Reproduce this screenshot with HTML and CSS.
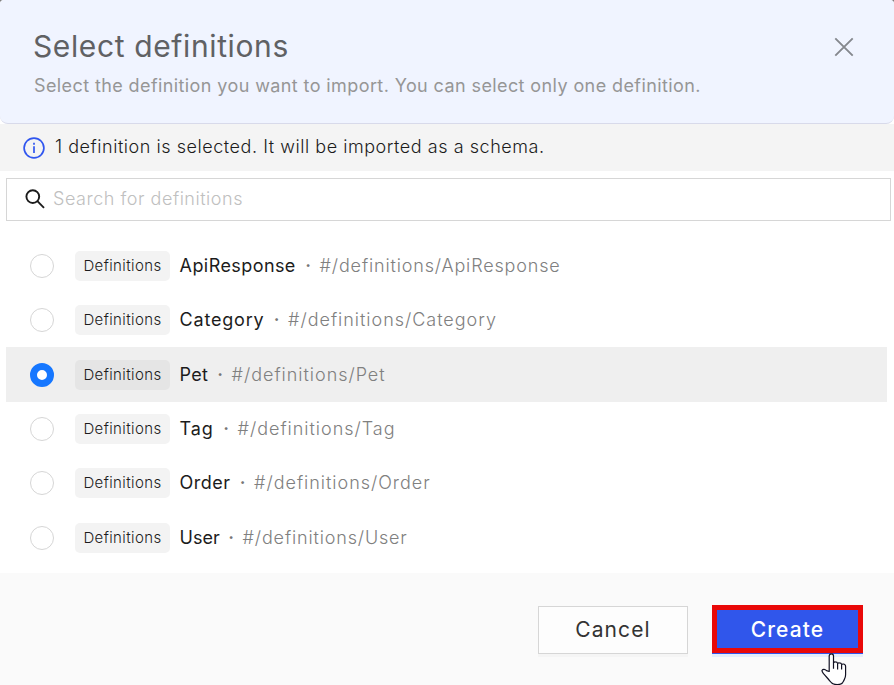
FILE: index.html
```
<!DOCTYPE html>
<html lang="en">
<head>
<meta charset="utf-8">
<title>Select definitions</title>
<link rel="stylesheet" href="styles.css">
</head>
<body>
<main class="dialog">
  <header class="header">
    <div>
      <h1 class="title">Select definitions</h1>
      <p class="subtitle">Select the definition you want to import. You can select only one definition.</p>
    </div>
    <svg class="close" viewBox="0 0 20 20"><path d="M1.3 1.3 18.7 18.7M18.7 1.3 1.3 18.7"/></svg>
  </header>
  <div class="notice">
    <svg class="info" viewBox="0 0 22 22"><circle cx="11" cy="11" r="9.9"/><path d="M11 9.3v6.7M11 5.8v2"/></svg>
    <span class="notice-text">1 definition is selected. It will be imported as a schema.</span>
  </div>
  <div class="search">
    <svg class="lens" viewBox="0 0 20 20"><circle cx="7.8" cy="7.6" r="6.4"/><path d="M12.4 12.2 19 18.8"/></svg>
    <span class="placeholder">Search for definitions</span>
  </div>
  <ul class="list">
    <li class="row"><i class="radio"></i><span class="tag">Definitions</span><span class="name api">ApiResponse</span><span class="dot">·</span><span class="path">#/definitions/ApiResponse</span></li>
    <li class="row"><i class="radio"></i><span class="tag">Definitions</span><span class="name category">Category</span><span class="dot">·</span><span class="path wide">#/definitions/Category</span></li>
    <li class="row selected"><i class="radio"></i><span class="tag">Definitions</span><span class="name pet">Pet</span><span class="dot">·</span><span class="path wide">#/definitions/Pet</span></li>
    <li class="row"><i class="radio"></i><span class="tag">Definitions</span><span class="name tagname">Tag</span><span class="dot">·</span><span class="path wide">#/definitions/Tag</span></li>
    <li class="row"><i class="radio"></i><span class="tag">Definitions</span><span class="name order">Order</span><span class="dot">·</span><span class="path wide">#/definitions/Order</span></li>
    <li class="row"><i class="radio"></i><span class="tag">Definitions</span><span class="name user">User</span><span class="dot">·</span><span class="path">#/definitions/User</span></li>
  </ul>
  <footer class="footer">
    <button class="btn cancel">Cancel</button>
    <button class="btn create">Create</button>
  </footer>
  <svg class="cursor" viewBox="0 0 26 33"><path d="M8.2 18.5V3a2.1 2.1 0 0 1 4.3 0v6.8q.3-1 1.8-.9 2 0 2.3 1.6.5-.7 1.8-.6 1.9.1 2.2 1.6.6-.6 1.7-.5 2.3.2 2.3 2.5v8.3c0 3.2-1.2 4.3-2 6.2-.9 2.5-2.9 3.7-6.4 3.7-3.8 0-5.7-1.4-7.7-4.1-1.8-2.5-3.6-4-5.5-6.4-1.2-1.6-2.5-2.7-1.9-3.9.8-1.4 2.9-1.1 4.4.3z"/><path d="M12.5 9.8v6M16.6 10.6v5.8M20.6 11.6v5"/></svg>
</main>
</body>
</html>
```

FILE: styles.css
```
* { box-sizing: border-box; }
body {
  margin: 0;
  background: #808080;
  font-family: Inter, "Open Sans", sans-serif;
  font-size: 18px;
  font-weight: 300;
  color: #1c1c1c;
}
.dialog {
  position: relative;
  display: flex;
  flex-direction: column;
  height: 685px;
  overflow: hidden;
  background: #fff;
  border-radius: 4px 4px 0 0;
}
.header {
  display: flex;
  justify-content: space-between;
  height: 124px;
  flex: none;
  padding: 26px 40px 0 33px;
  background: #f0f4ff;
  border-bottom: 1px solid #d8daea;
  border-radius: 0 0 8px 8px;
}
.title {
  margin: 0;
  font-size: 30px;
  font-weight: 400;
  line-height: 40px;
  letter-spacing: .62px;
  color: #606164;
}
.subtitle {
  margin: 7px 0 0;
  padding-left: 1px;
  font-weight: 400;
  line-height: 26px;
  letter-spacing: .4px;
  color: #969696;
}
.close { width: 20px; height: 20px; margin-top: 11px; fill: none; stroke: #85888e; stroke-width: 1.9; }
.notice {
  display: flex;
  align-items: center;
  gap: 10px;
  height: 47px;
  flex: none;
  padding-left: 23px;
  background: #f4f4f4;
}
.info { width: 22px; height: 22px; fill: none; stroke: #3056ef; stroke-width: 1.7; }
.notice-text { padding-bottom: 2px; letter-spacing: .54px; }
.search {
  display: flex;
  align-items: center;
  gap: 8px;
  height: 43px;
  flex: none;
  margin: 7px 3px 0 6px;
  padding: 0 0 2px 18px;
  border: 1px solid #d6d6d6;
}
.lens { width: 20px; height: 20px; fill: none; stroke: #1b1b1b; stroke-width: 1.9; }
.placeholder { letter-spacing: .53px; color: #c0c0c0; }
.list { height: 352px; flex: none; margin: 0; padding: 17.7px 7px 0 6px; list-style: none; }
.row { display: flex; align-items: center; height: 54.4px; padding-left: 24px; }
.selected { background: #efefef; }
.radio { width: 24px; height: 24px; border: 1px solid #d6d6d6; border-radius: 50%; background: #fff; }
.selected .radio { border: 7.7px solid #1677ff; }
.tag {
  width: 95px;
  height: 30px;
  margin: 0 9.6px 0 21px;
  border-radius: 5px;
  background: #f3f3f3;
  text-align: center;
  font-size: 15px;
  line-height: 30.5px;
  letter-spacing: .38px;
}
.selected .tag { background: #e5e5e5; }
.name { font-weight: 400; white-space: nowrap; }
.name, .dot, .path { padding-bottom: 1px; }
.api { width: 117px; letter-spacing: .42px; }
.category { width: 85.5px; letter-spacing: .8px; }
.pet { width: 29px; letter-spacing: .3px; }
.tagname { width: 35px; letter-spacing: .9px; }
.order { width: 51.5px; letter-spacing: .5px; }
.user { width: 40px; }
.dot { width: 23px; text-align: center; font-weight: 600; color: #777; }
.path { color: #808080; letter-spacing: .84px; }
.wide { letter-spacing: .97px; }
.footer {
  display: flex;
  justify-content: flex-end;
  align-items: flex-start;
  gap: 24px;
  flex: 1;
  padding: 32px 31px 0 0;
  background: #fafafa;
}
.btn { font: 400 21px/1 Inter, sans-serif; letter-spacing: 1.1px; }
.cancel {
  width: 150px;
  height: 48px;
  margin-top: 1px;
  padding: 0 0 1px;
  border: 1px solid #d6d6d6;
  background: #fdfdfd;
  color: #333;
  box-shadow: 0 3px 0 #f5f5f5;
}
.create {
  width: 151px;
  height: 48px;
  padding: 1px 0 0;
  border: 5px solid #e90808;
  background: #3056eb;
  color: #fff;
  font-weight: 500;
  box-shadow: 0 1px 0 #3056eb, 0 4px 0 #e5eefb;
}
.cursor { position: absolute; left: 821px; top: 653px; width: 26px; height: 33px; fill: #fff; stroke: #111122; stroke-width: 1.2; stroke-linejoin: round; }
```
